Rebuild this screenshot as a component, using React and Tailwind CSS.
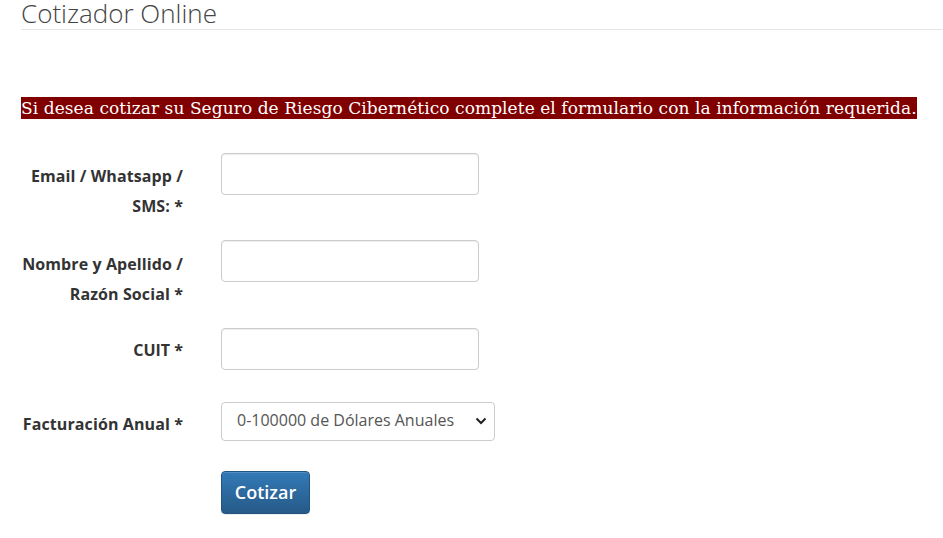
import React from "react";

function Field() {
  return (
    <input
      type="text"
      className="block w-[258px] h-[42px] rounded-[4px] border border-[#ccc] bg-white shadow-[inset_0_1px_1px_rgba(0,0,0,0.075)] outline-none px-3"
    />
  );
}

export default function App() {
  return (
    <div className="min-h-[538px] bg-white font-['Open_Sans',sans-serif] text-[#333] pl-[21px]">
      <h1 className="text-[26px] leading-[26px] font-light text-[#444] pb-[3px] border-b border-[#e5e5e5]">
        Cotizador Online
      </h1>

      <p className="mt-[67px] font-['DejaVu_Serif',serif] text-[17px] leading-[22px] tracking-[0.07px]">
        <span className="bg-[#800000] text-white py-[1px]">
          Si desea cotizar su Seguro de Riesgo Cibernético complete el formulario con la información requerida.
        </span>
      </p>

      <form className="mt-[34px] text-[16px] font-bold">
        <div className="flex items-start">
          <label className="w-[162px] text-right leading-[30px] pt-[8px] tracking-[0.1px]">
            Email / Whatsapp /<br />SMS: *
          </label>
          <div className="ml-[38px]">
            <Field />
          </div>
        </div>

        <div className="flex items-start mt-[19px]">
          <label className="w-[162px] text-right leading-[30px] pt-[9px] tracking-[0.1px]">
            Nombre y Apellido /<br />Razón Social *
          </label>
          <div className="ml-[38px]">
            <Field />
          </div>
        </div>

        <div className="flex items-start mt-[19px]">
          <label className="w-[162px] text-right leading-[30px] pt-[7px]">CUIT *</label>
          <div className="ml-[38px]">
            <Field />
          </div>
        </div>

        <div className="flex items-start mt-[32px]">
          <label className="w-[162px] text-right leading-[30px] pt-[7px] tracking-[0.1px]">Facturación Anual *</label>
          <div className="ml-[38px] relative">
            <select className="appearance-none block w-[274px] h-[39px] rounded-[4px] border border-[#ccc] bg-white pl-[15px] pb-[3px] text-[16px] font-normal text-[#555] outline-none">
              <option>0-100000 de Dólares Anuales</option>
            </select>
            <svg
              className="absolute right-[8px] top-[14px] pointer-events-none"
              width="12"
              height="10"
              viewBox="0 0 12 10"
              fill="none"
              stroke="#222"
              strokeWidth="2"
            >
              <path d="M1.5 2.5l4.5 4.5 4.5-4.5" />
            </svg>
          </div>
        </div>

        <div className="mt-[30px] ml-[200px]">
          <button
            type="button"
            className="w-[89px] h-[43px] rounded-[4px] border border-[#245580] bg-gradient-to-b from-[#337ab7] to-[#265a88] text-white text-[18px] font-semibold shadow-[inset_0_1px_0_rgba(255,255,255,0.15),0_1px_1px_rgba(0,0,0,0.075)]"
          >
            Cotizar
          </button>
        </div>
      </form>
    </div>
  );
}
